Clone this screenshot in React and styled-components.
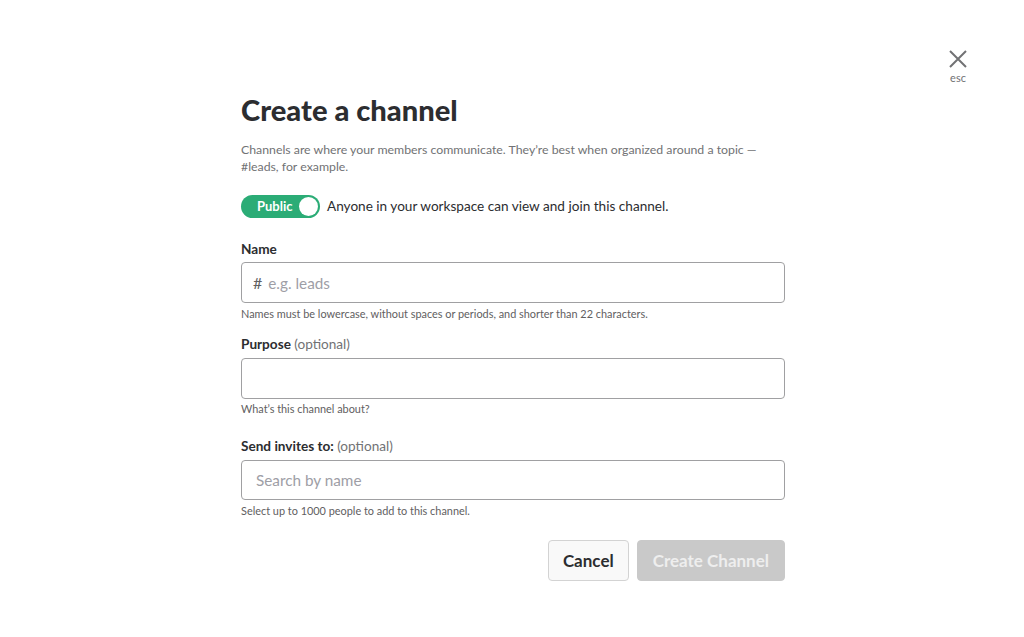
import React from 'react';
import styled, { createGlobalStyle } from 'styled-components';

const GlobalStyle = createGlobalStyle`
  html, body {
    margin: 0;
    padding: 0;
    background: #fff;
    font-family: Lato, "Noto Sans", "Liberation Sans", sans-serif;
    color: #2c2d30;
  }
`;

const Page = styled.div`
  position: relative;
  width: 1024px;
  height: 637px;
  display: flex;
  justify-content: flex-start;
  padding-left: 241px;
  padding-top: 93px;
  box-sizing: border-box;
`;

const Close = styled.div`
  position: absolute;
  top: 49px;
  left: 946px;
  width: 24px;
  display: flex;
  flex-direction: column;
  align-items: center;
  color: #717274;
  cursor: pointer;

  span {
    font-size: 11px;
    line-height: 12px;
    margin-top: 3px;
  }
`;

const Form = styled.div`
  width: 544px;
  display: flex;
  flex-direction: column;
`;

const Title = styled.h1`
  margin: 0;
  font-size: 29.1px;
  line-height: 34px;
  font-weight: 900;
  color: #2c2d30;
`;

const Description = styled.p`
  margin: 13.5px 0 0;
  font-size: 12.3px;
  line-height: 17px;
  color: #717274;
  width: 530px;
`;

const ToggleRow = styled.div`
  display: flex;
  align-items: center;
  margin-top: 20px;
  gap: 7px;
  font-size: 13.6px;
  color: #2c2d30;
`;

const Toggle = styled.div`
  width: 79px;
  height: 23px;
  border-radius: 12px;
  background: #2bac76;
  display: flex;
  align-items: center;
  justify-content: space-between;
  padding: 0 2px 0 16px;
  box-sizing: border-box;
  color: #fff;
  font-size: 13px;
  font-weight: 700;
`;

const Knob = styled.div`
  width: 19px;
  height: 19px;
  border-radius: 50%;
  background: #fff;
`;

const Label = styled.label`
  display: block;
  margin-top: ${p => p.$top}px;
  font-size: 13.6px;
  line-height: 20px;
  font-weight: 700;
  color: #2c2d30;

  em {
    font-style: normal;
    font-weight: 400;
    color: #717274;
  }
`;

const InputBox = styled.div`
  margin-top: ${p => p.$top || 3}px;
  height: ${p => p.$height || 41}px;
  border: 1px solid #a0a0a2;
  border-radius: 4px;
  box-sizing: border-box;
  display: flex;
  align-items: center;
  padding: 0 14px 0 ${p => p.$left || 11}px;
  font-size: 15.3px;
  color: #9e9ea6;
`;

const Hash = styled.span`
  color: #616061;
  font-size: 16px;
  margin-right: 6px;
`;

const Help = styled.div`
  margin-top: ${p => p.$top || 4}px;
  font-size: 10.9px;
  line-height: 14px;
  color: #616061;
`;

const Actions = styled.div`
  display: flex;
  justify-content: flex-end;
  gap: 8px;
  margin-top: 22px;
`;

const Button = styled.button`
  height: 41px;
  padding: 0 ${p => (p.$primary ? 15 : 14)}px;
  border-radius: 4px;
  font-family: inherit;
  font-size: 17px;
  font-weight: 700;
  border: 1px solid ${p => (p.$primary ? '#c9c9c9' : '#d3d3d3')};
  background: ${p => (p.$primary ? '#c9c9c9' : '#f9f9f9')};
  color: ${p => (p.$primary ? '#eeeeee' : '#2c2d30')};
  cursor: pointer;
`;

export default function App() {
  return (
    <>
      <GlobalStyle />
      <Page>
        <Close>
          <svg width="20" height="20" viewBox="0 0 20 20">
            <path d="M2 2 L18 18 M18 2 L2 18" stroke="#717274" strokeWidth="2" />
          </svg>
          <span>esc</span>
        </Close>
        <Form>
          <Title>Create a channel</Title>
          <Description>
            Channels are where your members communicate. They’re best when organized around a topic —
            #leads, for example.
          </Description>
          <ToggleRow>
            <Toggle>
              Public
              <Knob />
            </Toggle>
            Anyone in your workspace can view and join this channel.
          </ToggleRow>

          <Label $top={21.5}>Name</Label>
          <InputBox>
            <Hash>#</Hash>e.g. leads
          </InputBox>
          <Help>Names must be lowercase, without spaces or periods, and shorter than 22 characters.</Help>

          <Label $top={13}>
            Purpose <em>(optional)</em>
          </Label>
          <InputBox $top={4} />
          <Help $top={3}>What’s this channel about?</Help>

          <Label $top={20}>
            Send invites to: <em>(optional)</em>
          </Label>
          <InputBox $top={4} $height={40} $left={14}>
            Search by name
          </InputBox>
          <Help>Select up to 1000 people to add to this channel.</Help>

          <Actions>
            <Button>Cancel</Button>
            <Button $primary>Create Channel</Button>
          </Actions>
        </Form>
      </Page>
    </>
  );
}
